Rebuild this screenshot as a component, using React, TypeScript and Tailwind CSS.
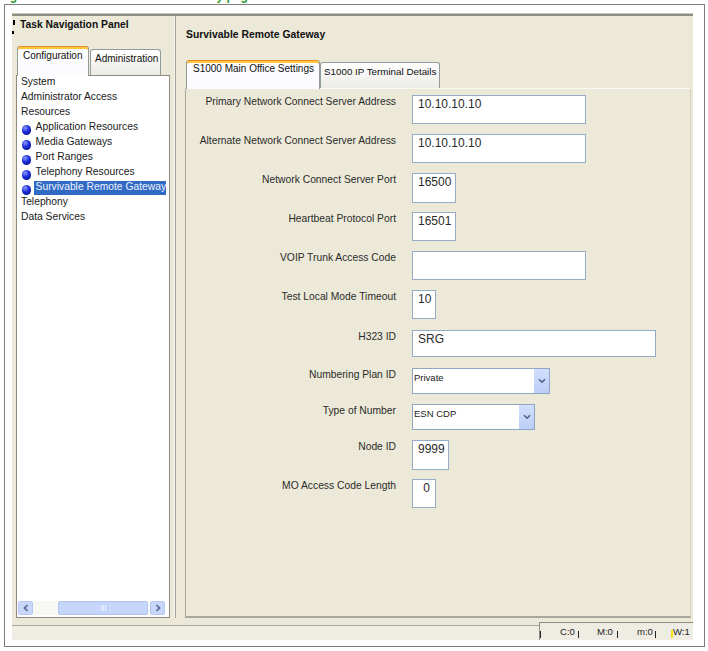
import React from "react";

type TreeItem = { t: string; b?: boolean; sel?: boolean };

const tree: TreeItem[] = [
  { t: "System" },
  { t: "Administrator Access" },
  { t: "Resources" },
  { t: "Application Resources", b: true },
  { t: "Media Gateways", b: true },
  { t: "Port Ranges", b: true },
  { t: "Telephony Resources", b: true },
  { t: "Survivable Remote Gateway", b: true, sel: true },
  { t: "Telephony" },
  { t: "Data Services" },
];

type FormRow = {
  label: string;
  mt: string;
  box: string;
  value: string;
  select?: boolean;
  right?: boolean;
};

const rows: FormRow[] = [
  { label: "Primary Network Connect Server Address", mt: "mt-[6px]", box: "h-[29px] w-[174px]", value: "10.10.10.10" },
  { label: "Alternate Network Connect Server Address", mt: "mt-[10px]", box: "h-[29px] w-[174px]", value: "10.10.10.10" },
  { label: "Network Connect Server Port", mt: "mt-[10px]", box: "h-[30px] w-[44px]", value: "16500" },
  { label: "Heartbeat Protocol Port", mt: "mt-[9px]", box: "h-[29px] w-[44px]", value: "16501" },
  { label: "VOIP Trunk Access Code", mt: "mt-[10px]", box: "h-[29px] w-[174px]", value: "" },
  { label: "Test Local Mode Timeout", mt: "mt-[10px]", box: "h-[29px] w-[24px]", value: "10" },
  { label: "H323 ID", mt: "mt-[11px]", box: "h-[27px] w-[244px]", value: "SRG" },
  { label: "Numbering Plan ID", mt: "mt-[11px]", box: "h-[26px] w-[138px]", value: "Private", select: true },
  { label: "Type of Number", mt: "mt-[10px]", box: "h-[26px] w-[123px]", value: "ESN CDP", select: true },
  { label: "Node ID", mt: "mt-[10px]", box: "h-[30px] w-[37px]", value: "9999" },
  { label: "MO Access Code Length", mt: "mt-[9px]", box: "h-[29px] w-[24px]", value: "0", right: true },
];

function Bullet() {
  return (
    <span className="ml-[4.7px] mt-[6.5px] inline-block h-[9.5px] w-[9.5px] shrink-0 rounded-full bg-[radial-gradient(circle_at_35%_30%,#8a98ff_0%,#1a2ad8_45%,#000a78_100%)]" />
  );
}

function Chevron({ dir }: { dir: "left" | "right" | "down" }) {
  if (dir === "down") {
    return (
      <svg width="8" height="6" viewBox="0 0 8 6">
        <path d="M1 1.2 L4 4.2 L7 1.2" fill="none" stroke="#4d6185" strokeWidth="1.6" />
      </svg>
    );
  }
  return (
    <svg width="6" height="8" viewBox="0 0 6 8">
      {dir === "left" ? (
        <path d="M4.5 1 L1.5 4 L4.5 7" fill="none" stroke="#4d6185" strokeWidth="1.6" />
      ) : (
        <path d="M1.5 1 L4.5 4 L1.5 7" fill="none" stroke="#4d6185" strokeWidth="1.6" />
      )}
    </svg>
  );
}

export default function App() {
  return (
    <div className="relative h-[651px] w-[708px] overflow-hidden bg-white font-['Liberation_Sans',Arial,sans-serif] text-black">
      {/* clipped figure caption */}
      <div className="h-[4px] overflow-hidden">
        <div className="-ml-[1px] -mt-[11px] whitespace-nowrap text-[12px] font-bold leading-[14px] text-[#2f9a35]">
          Figure 210 Survivable Remote Gateway page
        </div>
      </div>

      {/* frame */}
      <div className="ml-[4px] h-[643px] w-[701px] border border-[#7c7c7c] pl-[7px] pt-[8px]">
        {/* application */}
        <div className="flex h-[627px] w-[681px] flex-col bg-[#ECE9D8]">
          <div className="h-[1px] bg-[#c9c7ba]" />
          <div className="h-[2px] bg-[#8f8e82]" />

          <div className="flex h-[602px]">
            {/* left panel */}
            <div className="flex w-[160px] flex-col">
              <div className="flex h-[30px]">
                <div className="ml-[1px] flex w-[3px] flex-col pt-[4px]">
                  <span className="h-[5px] w-[2px] bg-black" />
                  <span className="ml-[-1px] mt-[6px] h-[3px] w-[2px] bg-black" />
                </div>
                <div className="ml-[4px] whitespace-nowrap pt-[2.5px] text-[10.3px] font-bold leading-[12px] text-[#111]">
                  Task Navigation Panel
                </div>
              </div>

              <div className="flex h-[29px] items-end pl-[5px]">
                <div className="relative z-10 -mb-[1px] h-[30px] w-[72px] whitespace-nowrap rounded-t-[3px] border border-b-0 border-[#919B9C] border-t-[#E68B2C] bg-[#FCFCFE] pl-[5px] pt-[3px] text-[10px] leading-[12px] text-[#111] shadow-[inset_0_2px_0_#FFC83C]">
                  Configuration
                </div>
                <div className="ml-[1px] h-[26px] w-[71px] whitespace-nowrap rounded-t-[3px] border border-b-0 border-[#919B9C] bg-[linear-gradient(#ffffff,#ecebe6)] pl-[4px] pt-[3px] text-[10px] leading-[12px] text-[#111]">
                  Administration
                </div>
              </div>

              <div className="ml-[4px] flex h-[543px] w-[154px] flex-col border border-[#8d8b80] bg-white">
                <div className="flex-1 overflow-hidden">
                  <div className="-mt-[2.5px]">
                    {tree.map((it) => (
                      <div
                        key={it.t}
                        className="flex h-[15px] items-start whitespace-nowrap text-[10.3px] leading-[15px] text-[#1a1a1a]"
                      >
                        {it.b ? <Bullet /> : null}
                        {it.sel ? (
                          <span className="ml-[2.7px] mt-[2px] block h-[14px] w-[132px] bg-[#316AC5] pl-[1.7px] leading-[12px] text-[#eef3ff]">
                            {it.t}
                          </span>
                        ) : it.b ? (
                          <span className="ml-[4.4px]">{it.t}</span>
                        ) : (
                          <span className="pl-[4px]">{it.t}</span>
                        )}
                      </div>
                    ))}
                  </div>
                </div>
                {/* horizontal scrollbar */}
                <div className="mx-[1px] mb-[2px] flex h-[14px] w-[147px]">
                  <div className="flex h-full w-[15px] items-center justify-center rounded-[2px] border border-[#b7c8ef] bg-[#c9d7fa]">
                    <Chevron dir="left" />
                  </div>
                  <div className="w-[25px] bg-[#f7f7f4]" />
                  <div className="flex h-full w-[90px] items-center justify-center rounded-[2px] border border-[#b3c5ee] bg-[#c6d5fb]">
                    <div className="flex gap-[1px]">
                      <span className="h-[6px] w-[1px] bg-[#eef3ff]" />
                      <span className="h-[6px] w-[1px] bg-[#eef3ff]" />
                      <span className="h-[6px] w-[1px] bg-[#eef3ff]" />
                    </div>
                  </div>
                  <div className="w-[2px] bg-[#f7f7f4]" />
                  <div className="flex h-full w-[15px] items-center justify-center rounded-[2px] border border-[#b7c8ef] bg-[#c9d7fa]">
                    <Chevron dir="right" />
                  </div>
                </div>
              </div>
            </div>

            {/* splitter */}
            <div className="flex w-[5px]">
              <div className="ml-[2px] w-[1px] bg-[#f7f6ef]" />
              <div className="w-[1px] bg-[#a3a195]" />
            </div>

            {/* right panel */}
            <div className="flex w-[516px] flex-col">
              <div className="h-[44px] whitespace-nowrap pl-[9px] pt-[12.5px] text-[10.4px] font-bold leading-[12px] text-[#111]">
                Survivable Remote Gateway
              </div>

              <div className="flex h-[28px] items-end pl-[9px]">
                <div className="relative z-10 -mb-[1px] h-[29px] w-[134px] whitespace-nowrap rounded-t-[3px] border border-b-0 border-[#919B9C] border-t-[#E68B2C] bg-[#FCFCFE] pl-[6px] pt-[2px] text-[10px] leading-[12px] text-[#111] shadow-[inset_0_2px_0_#FFC83C]">
                  S1000 Main Office Settings
                </div>
                <div className="h-[26px] w-[120px] overflow-hidden whitespace-nowrap rounded-t-[3px] border border-b-0 border-[#919B9C] bg-[linear-gradient(#ffffff,#ecebe6)] pl-[3px] pt-[3px] text-[9.8px] leading-[12px] text-[#111]">
                  S1000 IP Terminal Details
                </div>
              </div>

              <div className="ml-[8px] flex h-[530px] w-[506px] flex-col border border-b-2 border-[#a9a79b] border-t-[#faf9f4] border-r-[#d6d4c8]">
                {rows.map((r) => (
                  <div key={r.label} className={`flex items-start ${r.mt}`}>
                    <div className="w-[210px] shrink-0 whitespace-nowrap pt-[1px] text-right text-[10.3px] leading-[12px] text-[#2b2b2b]">
                      {r.label}
                    </div>
                    {r.select ? (
                      <div className={`ml-[16px] flex border border-[#8fa7c4] bg-white ${r.box}`}>
                        <div className="flex-1 pl-[1px] pt-[3px] text-[9.5px] leading-[11px] text-[#222]">
                          {r.value}
                        </div>
                        <div className="flex w-[16px] items-center justify-center border-l border-white bg-[linear-gradient(#d2defc,#bccef7)]">
                          <Chevron dir="down" />
                        </div>
                      </div>
                    ) : (
                      <div
                        className={`ml-[16px] border border-[#95acc6] bg-white pt-[1px] text-[12px] leading-[14px] text-[#2a2a2a] ${r.box} ${
                          r.right ? "pr-[5px] text-right" : "pl-[5px]"
                        }`}
                      >
                        {r.value}
                      </div>
                    )}
                  </div>
                ))}
              </div>
            </div>
          </div>

          {/* status bar */}
          <div className="flex h-[22px]">
            <div className="mt-[7px] flex-1 border-t border-[#aaa89b] bg-[#efede3]" />
            <div className="mt-[4px] flex w-[154px] items-start overflow-hidden border-l border-t border-[#8e8c80] bg-[#efede3] pt-[3px] text-[9.6px] leading-[12px] text-[#222]">
              <div className="flex h-[14px] w-full items-start whitespace-nowrap">
                <span className="mt-[5px] inline-block h-[7px] w-[1px] shrink-0 bg-[#222]" />
                <span className="ml-[19px] shrink-0">C:0</span>
                <span className="ml-[3px] mt-[5px] inline-block h-[7px] w-[1px] shrink-0 bg-[#222]" />
                <span className="ml-[18px] shrink-0">M:0</span>
                <span className="ml-[4px] mt-[5px] inline-block h-[7px] w-[1px] shrink-0 bg-[#222]" />
                <span className="ml-[19px] shrink-0">m:0</span>
                <span className="ml-[2px] mt-[5px] inline-block h-[7px] w-[1px] shrink-0 bg-[#222]" />
                <span className="ml-[15px] mt-[4px] inline-block h-[8px] w-[2px] shrink-0 bg-[#f4e21a]" />
                <span className="shrink-0">W:1</span>
              </div>
            </div>
          </div>
        </div>
      </div>
    </div>
  );
}
